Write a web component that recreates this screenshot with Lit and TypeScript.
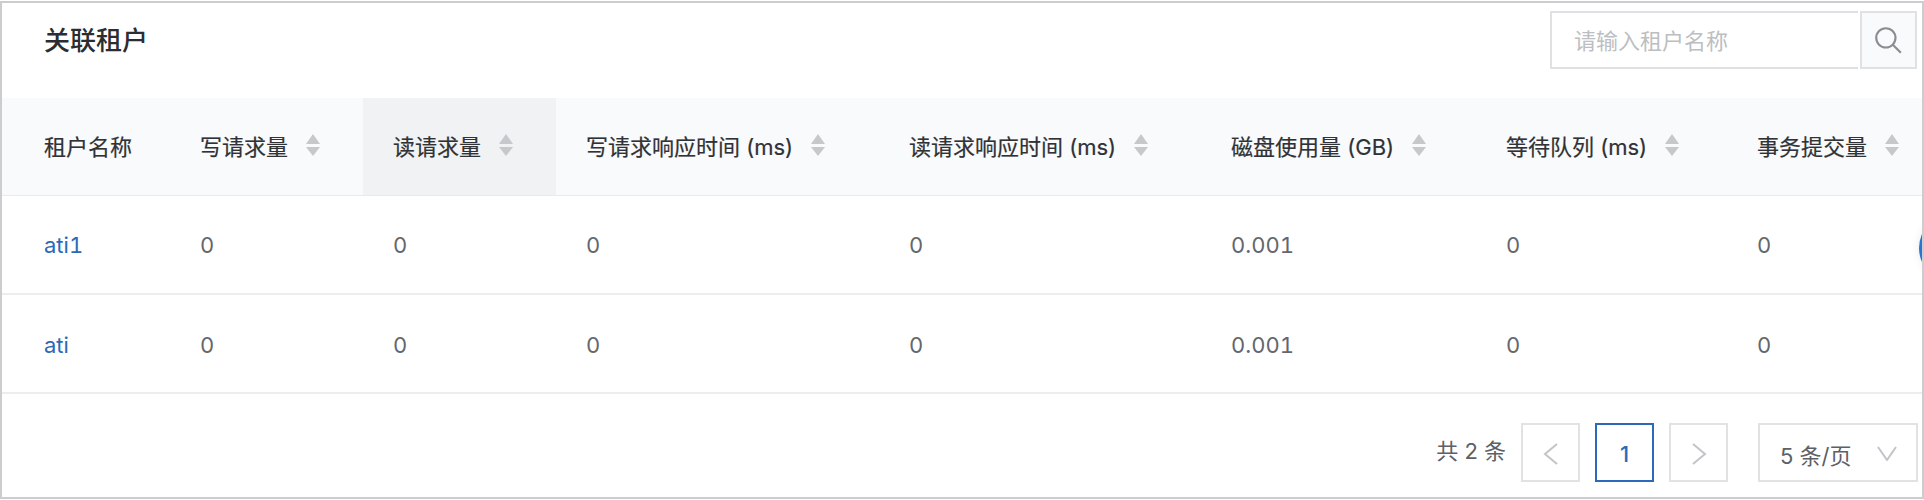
import { LitElement, html, css, svg } from "lit";
import { customElement } from "lit/decorators.js";

const COLS = [
  { label: "租户名称", w: 168, sort: false },
  { label: "写请求量", w: 193, sort: true },
  { label: "读请求量", w: 193, sort: true, active: true },
  { label: "写请求响应时间 (ms)", w: 323, sort: true },
  { label: "读请求响应时间 (ms)", w: 322, sort: true },
  { label: "磁盘使用量 (GB)", w: 275, sort: true },
  { label: "等待队列 (ms)", w: 251, sort: true },
  { label: "事务提交量", w: 195, sort: true },
];
const ROWS = [
  ["ati1", "0", "0", "0", "0", "0.001", "0", "0"],
  ["ati", "0", "0", "0", "0", "0.001", "0", "0"],
];

const sortIcon = svg`<svg class="sort" width="14" height="22" viewBox="0 0 14 22"><path d="M7 0 14 10H0Z" fill="#c6c8cb"/><path d="M7 22 14 13H0Z" fill="#c6c8cb"/></svg>`;

@customElement("app-root")
export class AppRoot extends LitElement {
  static styles = css`
    :host {
      display: block;
      width: 1924px;
      height: 500px;
      box-sizing: border-box;
      background: #fff;
      font-family: Inter, "Noto Sans CJK SC", sans-serif;
    }
    .panel {
      position: relative;
      box-sizing: border-box;
      width: 1924px;
      height: 498px;
      margin-top: 1px;
      border: 2px solid #cbcdcf;
      overflow: hidden;
      display: flex;
      flex-direction: column;
    }
    .top {
      height: 95px;
      flex: none;
      display: flex;
      justify-content: space-between;
      align-items: flex-start;
      padding: 8px 5px 0 42px;
      box-sizing: border-box;
    }
    h2 {
      margin: 14px 0 0;
      font-size: 26px;
      font-weight: 500;
      line-height: 32px;
      color: #2b2d30;
    }
    .search { display: flex; gap: 2px; }
    .search-input {
      width: 308px;
      height: 58px;
      box-sizing: border-box;
      border: 2px solid #dfe1e3;
      border-right: none;
      padding-left: 22px;
      padding-bottom: 2px;
      display: flex;
      align-items: center;
      font-size: 22px;
      color: #bcbec2;
    }
    .search-btn {
      width: 57px;
      height: 58px;
      box-sizing: border-box;
      border: 2px solid #dfe1e3;
      background: #f9fafb;
      display: flex;
      align-items: center;
      justify-content: center;
      padding-right: 2px;
    }
    .search-btn svg { display: block; }
    table {
      border-collapse: collapse;
      table-layout: fixed;
      width: 1920px;
      flex: none;
    }
    th {
      height: 97px;
      background: #f9fafc;
      border-bottom: 1px solid #e8eaec;
      padding: 0 0 2px 30px;
      box-sizing: border-box;
      text-align: left;
      font-size: 22px;
      font-weight: 400;
      color: #303235;
      white-space: nowrap;
      overflow: hidden;
      -webkit-text-stroke: 0.2px #303235;
    }
    th.active { background: #f1f2f4; }
    th:first-child, td:first-child { padding-left: 42px; }
    th .label { display: inline-flex; align-items: center; gap: 18px; }
    td {
      height: 99px;
      box-sizing: border-box;
      border-bottom: 2px solid #ecedef;
      padding: 2px 0 0 30px;
      font-size: 22px;
      font-weight: 400;
      font-variant-numeric: tabular-nums;
      color: #63666c;
    }
    a { color: #2a6ab8; text-decoration: none; }
    .sort { display: block; }
    .pager {
      flex: 1;
      display: flex;
      justify-content: flex-end;
      align-items: flex-start;
      padding: 29px 4px 0 0;
      color: #5d6066;
      font-size: 22px;
    }
    .total { margin: 14px 15px 0 0; line-height: 28px; }
    .box {
      width: 59px;
      height: 59px;
      box-sizing: border-box;
      border: 2px solid #e0e2e4;
      display: flex;
      align-items: center;
      justify-content: center;
      padding-top: 2px;
    }
    .nav { display: flex; gap: 15px; }
    .box.current { border-color: #2a6ab8; color: #2a6ab8; font-weight: 500; }
    .select {
      width: 160px;
      height: 59px;
      box-sizing: border-box;
      border: 2px solid #e0e2e4;
      display: flex;
      align-items: center;
      justify-content: space-between;
      padding: 2px 19px 0 20px;
      margin-left: 30px;
    }
    .dot {
      position: absolute;
      right: -65px;
      top: 211px;
      width: 68px;
      height: 68px;
      border-radius: 50%;
      background: #2b72d6;
      box-shadow: 0 0 10px rgba(0, 0, 0, 0.08);
    }
  `;

  render() {
    return html`
      <div class="panel">
        <div class="top">
          <h2>关联租户</h2>
          <div class="search">
            <div class="search-input">请输入租户名称</div>
            <div class="search-btn">
              <svg width="30" height="30" viewBox="0 0 28 28" fill="none" stroke="#8a8d92" stroke-width="2">
                <circle cx="12" cy="12" r="9"/><path d="M18.5 18.5 26 26"/>
              </svg>
            </div>
          </div>
        </div>
        <table>
          <colgroup>${COLS.map((c) => html`<col style="width:${c.w}px" />`)}</colgroup>
          <thead>
            <tr>
              ${COLS.map(
                (c) => html`<th class=${c.active ? "active" : ""}><span class="label">${c.label}${c.sort ? sortIcon : ""}</span></th>`
              )}
            </tr>
          </thead>
          <tbody>
            ${ROWS.map(
              (r) => html`<tr>${r.map((v, i) => html`<td>${i === 0 ? html`<a href="#">${v}</a>` : v}</td>`)}</tr>`
            )}
          </tbody>
        </table>
        <div class="pager">
          <span class="total">共 2 条</span>
          <div class="nav">
            <div class="box">
              <svg width="18" height="24" viewBox="0 0 18 24" fill="none" stroke="#c2c4c7" stroke-width="2"><path d="M15 2 3 12 15 22"/></svg>
            </div>
            <div class="box current">1</div>
            <div class="box">
              <svg width="18" height="24" viewBox="0 0 18 24" fill="none" stroke="#c2c4c7" stroke-width="2"><path d="M3 2 15 12 3 22"/></svg>
            </div>
          </div>
          <div class="select">
            <span>5 条/页</span>
            <svg width="20" height="15" viewBox="0 0 20 15" fill="none" stroke="#c2c4c7" stroke-width="2"><path d="M1 1 10 14 19 1"/></svg>
          </div>
        </div>
        <div class="dot"></div>
      </div>
    `;
  }
}
